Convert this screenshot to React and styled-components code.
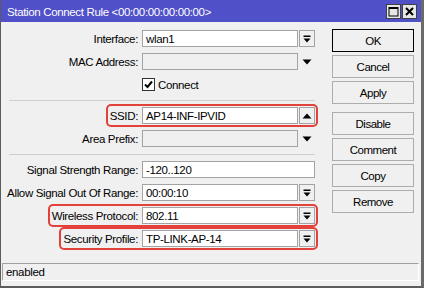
import React from "react";
import styled, { createGlobalStyle, css } from "styled-components";

const Global = createGlobalStyle`
  html, body { margin: 0; padding: 0; background: #ffffff; }
  body { font-family: "Liberation Sans", Arial, sans-serif; }
  * { box-sizing: border-box; }
`;

const Window = styled.div`
  width: 424px;
  height: 288px;
  display: flex;
  flex-direction: column;
  background: #f0f0f0;
  border-left: 1px solid #5c5c5c;
  border-right: 3px solid #6a6a6a;
  border-bottom: 2px solid #5c5c5c;
  font-size: 11.5px;
  letter-spacing: -0.35px;
  color: #000;
`;

const TitleBar = styled.div`
  height: 22px;
  flex: none;
  background: #5050c8;
  display: flex;
  align-items: center;
  padding: 0 4px 0 6px;
`;

const Title = styled.div`
  flex: 1;
  color: #fff;
  font-size: 11.5px;
  letter-spacing: -0.35px;
  padding-top: 1px;
`;

const TitleButtons = styled.div`
  display: flex;
  gap: 1px;
`;

const TitleBtn = styled.div`
  width: 15px;
  height: 15px;
  background: #e6e6e6;
  border: 1px solid #404040;
  display: flex;
  align-items: center;
  justify-content: center;
`;

const Body = styled.div`
  flex: 1;
  display: flex;
  padding-top: 8px;
`;

const Form = styled.div`
  width: 314px;
  padding-left: 8px;
  display: flex;
  flex-direction: column;
  gap: 6px;
`;

const Row = styled.div`
  height: 17px;
  display: flex;
  align-items: center;
  justify-content: flex-end;
`;

const Mark = styled.div`
  display: flex;
  align-items: center;
  padding: 1px 1px 1px 2px;
  margin-right: -1px;
  border-radius: 3px;
  ${(p) =>
    p.$on &&
    css`
      box-shadow: 0 0 0 2px #e2413c;
    `}
`;

const Label = styled.span`
  margin-right: 4px;
  white-space: nowrap;
`;

const Field = styled.div`
  width: 173px;
  height: 17px;
  display: flex;
  gap: 1px;
`;

const Input = styled.div`
  flex: 1;
  height: 17px;
  border: 1px solid #a3a3a3;
  background: ${(p) => (p.$disabled ? "#f0f0f0" : "#ffffff")};
  padding: 0 3px;
  display: flex;
  align-items: center;
  white-space: nowrap;
  overflow: hidden;
`;

const DropBtn = styled.div`
  width: 16px;
  height: 17px;
  flex: none;
  display: flex;
  align-items: center;
  justify-content: center;
  ${(p) =>
    p.$boxed &&
    css`
      border: 1px solid #a3a3a3;
      background: #f0f0f0;
    `}
`;

const CheckRow = styled.div`
  height: 17px;
  display: flex;
  align-items: center;
  padding-left: 133px;
  gap: 3px;
`;

const CheckBox = styled.div`
  width: 13px;
  height: 13px;
  border: 1px solid #333;
  background: #fff;
  display: flex;
  align-items: center;
  justify-content: center;
`;

const Separator = styled.div`
  height: 1px;
  margin-top: 1px;
  background: #cfcfcf;
`;

const Buttons = styled.div`
  width: 82px;
  margin-left: 17px;
  margin-top: -1px;
  display: flex;
  flex-direction: column;
  gap: 3px;
`;

const Button = styled.div`
  height: 23px;
  display: flex;
  align-items: center;
  justify-content: center;
  background: #f0f0f0;
  border: 1px solid ${(p) => (p.$default ? "#000" : "#adadad")};
  font-size: 11.5px;
  letter-spacing: -0.5px;
  ${(p) => p.$spaced && css`margin-top: 5px;`}
`;

const StatusBar = styled.div`
  height: 18px;
  flex: none;
  margin: 0 2px 5px 1px;
  border-top: 1px solid #a0a0a0;
  border-left: 1px solid #a0a0a0;
  border-bottom: 1px solid #ffffff;
  border-right: 1px solid #ffffff;
  padding-left: 3px;
  display: flex;
  align-items: center;
`;

const BarDown = () => (
  <svg width="8" height="8" viewBox="0 0 8 8">
    <rect x="0.5" y="0.5" width="7" height="1.5" fill="#000" />
    <path d="M0.5 3.5 H7.5 L4 7.5 Z" fill="#000" />
  </svg>
);

const Down = () => (
  <svg width="10" height="6" viewBox="0 0 10 6">
    <path d="M0.5 0.5 H9.5 L5 5.5 Z" fill="#000" />
  </svg>
);

const Up = () => (
  <svg width="10" height="6" viewBox="0 0 10 6">
    <path d="M0.5 5.5 H9.5 L5 0.5 Z" fill="#000" />
  </svg>
);

const Check = () => (
  <svg width="9" height="9" viewBox="0 0 9 9">
    <path d="M1 4.5 L3.5 7 L8 1.5" stroke="#000" strokeWidth="2" fill="none" />
  </svg>
);

const MaxIcon = () => (
  <svg width="11" height="11" viewBox="0 0 11 11">
    <rect x="1" y="1.5" width="9" height="8.5" fill="none" stroke="#000" strokeWidth="1" />
    <rect x="1" y="1" width="9" height="2" fill="#000" />
  </svg>
);

const CloseIcon = () => (
  <svg width="11" height="11" viewBox="0 0 11 11">
    <path d="M2 2 L9 9 M9 2 L2 9" stroke="#000" strokeWidth="2" />
  </svg>
);

const FormRow = ({ label, value, btn, disabled, mark, full }) => (
  <Row>
    <Mark $on={mark}>
      <Label>{label}</Label>
      <Field>
        <Input $disabled={disabled}>{value}</Input>
        {!full && (
          <DropBtn $boxed={btn !== "down"}>
            {btn === "down" ? <Down /> : btn === "up" ? <Up /> : <BarDown />}
          </DropBtn>
        )}
      </Field>
    </Mark>
  </Row>
);

export default function App() {
  return (
    <>
      <Global />
      <Window>
        <TitleBar>
          <Title>Station Connect Rule &lt;00:00:00:00:00:00&gt;</Title>
          <TitleButtons>
            <TitleBtn><MaxIcon /></TitleBtn>
            <TitleBtn><CloseIcon /></TitleBtn>
          </TitleButtons>
        </TitleBar>
        <Body>
          <Form>
            <FormRow label="Interface:" value="wlan1" btn="bar" />
            <FormRow label="MAC Address:" value="" btn="down" disabled />
            <CheckRow>
              <CheckBox><Check /></CheckBox>
              <span>Connect</span>
            </CheckRow>
            <Separator />
            <FormRow label="SSID:" value="AP14-INF-IPVID" btn="up" mark />
            <FormRow label="Area Prefix:" value="" btn="down" disabled />
            <Separator />
            <FormRow label="Signal Strength Range:" value="-120..120" full />
            <FormRow label="Allow Signal Out Of Range:" value="00:00:10" btn="bar" />
            <FormRow label="Wireless Protocol:" value="802.11" btn="bar" mark />
            <FormRow label="Security Profile:" value="TP-LINK-AP-14" btn="bar" mark />
          </Form>
          <Buttons>
            <Button $default>OK</Button>
            <Button>Cancel</Button>
            <Button>Apply</Button>
            <Button $spaced>Disable</Button>
            <Button>Comment</Button>
            <Button>Copy</Button>
            <Button>Remove</Button>
          </Buttons>
        </Body>
        <StatusBar>enabled</StatusBar>
      </Window>
    </>
  );
}
